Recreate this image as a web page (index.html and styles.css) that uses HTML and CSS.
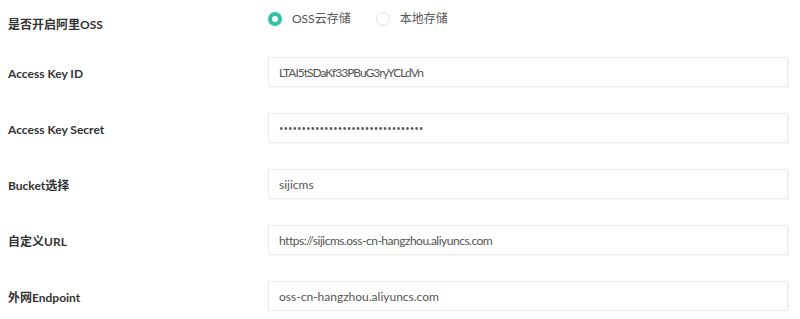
FILE: index.html
```html
<!DOCTYPE html>
<html lang="zh-CN">
<head>
<meta charset="utf-8">
<title>OSS设置</title>
<link rel="stylesheet" href="styles.css">
</head>
<body>
<form class="form">
  <div class="row row-radio">
    <label class="label">是否开启阿里OSS</label>
    <div class="control radios">
      <span class="radio checked"><i class="dot"></i><span>OSS云存储</span></span>
      <span class="radio"><i class="dot"></i><span>本地存储</span></span>
    </div>
  </div>
  <div class="row">
    <label class="label">Access Key ID</label>
    <div class="control"><input class="input input-key" type="text" value="LTAI5tSDaKf33PBuG3ryYCLdVn"></div>
  </div>
  <div class="row">
    <label class="label">Access Key Secret</label>
    <div class="control"><input class="input input-secret" type="password" value="abcdefghijklmnopqrstuvwxyz012345"></div>
  </div>
  <div class="row">
    <label class="label">Bucket选择</label>
    <div class="control"><input class="input" type="text" value="sijicms"></div>
  </div>
  <div class="row">
    <label class="label">自定义URL</label>
    <div class="control"><input class="input input-url" type="text" value="https://sijicms.oss-cn-hangzhou.aliyuncs.com"></div>
  </div>
  <div class="row">
    <label class="label">外网Endpoint</label>
    <div class="control"><input class="input" type="text" value="oss-cn-hangzhou.aliyuncs.com"></div>
  </div>
</form>
</body>
</html>
```
FILE: styles.css
```css
html, body {
  margin: 0;
  padding: 0;
  background: #fff;
}
body {
  font-family: Lato, "Noto Sans CJK SC", sans-serif;
  font-size: 12px;
  color: #333;
}
.form {
  padding: 8px 12px 0 8px;
  display: flex;
  flex-direction: column;
  gap: 26px;
}
.row {
  display: grid;
  grid-template-columns: 260px 520px;
  height: 30px;
}
.row-radio {
  margin-bottom: -7px;
}
.label {
  font-weight: bold;
  color: #333;
  padding-top: 4px;
  line-height: 26px;
}
.control {
  display: flex;
  align-items: center;
}
.radios {
  align-items: flex-start;
  padding-top: 4px;
  padding-left: 0;
}
.radio {
  display: flex;
  align-items: center;
  height: 14px;
  color: #555;
  margin-right: 25px;
}
.radio .dot {
  box-sizing: border-box;
  width: 14px;
  height: 14px;
  border-radius: 50%;
  border: 1px solid #e2e2e2;
  margin-right: 10px;
  background: #fff;
}
.radio.checked .dot {
  background: #fff;
  border: 4.5px solid #2fc3a6;
}
.radio span {
  line-height: 14px;
}
.input {
  box-sizing: border-box;
  width: 520px;
  height: 30px;
  border: 1px solid #ebebeb;
  box-shadow: 1px 1px 1px rgba(0,0,0,0.04);
  padding: 0 10px;
  font-family: inherit;
  font-size: 12px;
  color: #555;
  background: #fff;
  outline: none;
}
.input-key {
  letter-spacing: -1px;
}
.input-url {
  letter-spacing: -0.5px;
}
.input-secret {
  font-family: "Open Sans", sans-serif;
}
```
